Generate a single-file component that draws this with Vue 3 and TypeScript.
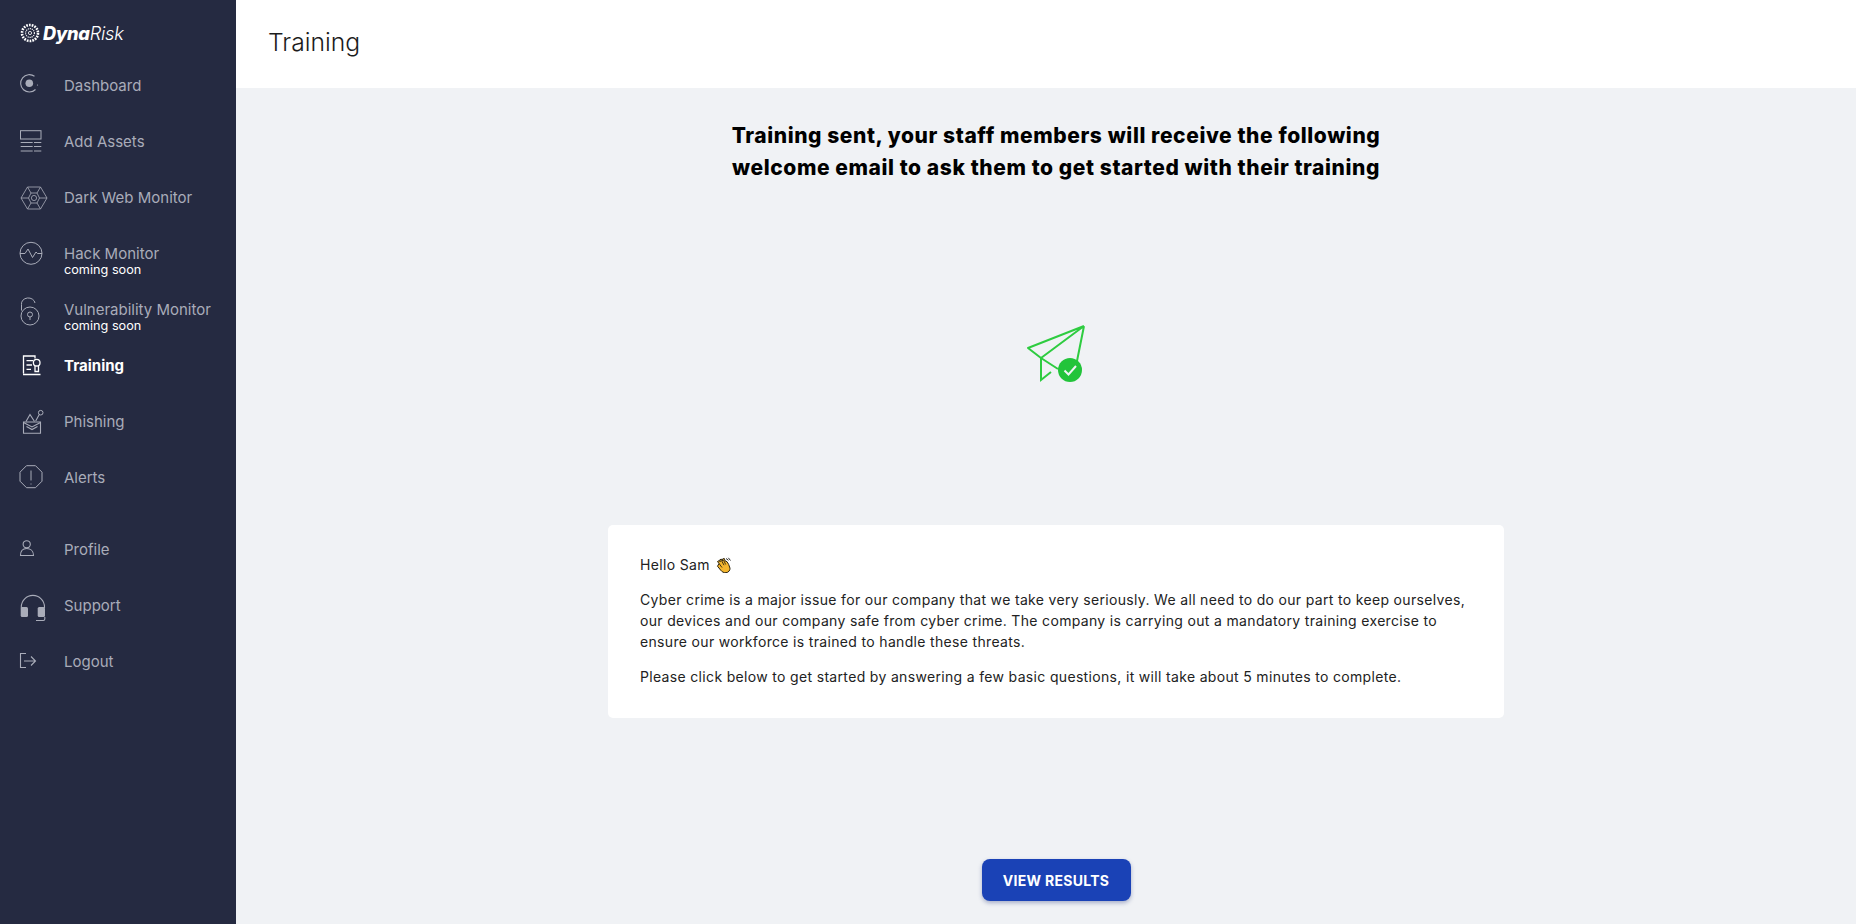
<script setup lang="ts">
interface NavItem { label: string; icon: string; soon?: boolean; active?: boolean }
const primary: NavItem[] = [
  { label: 'Dashboard', icon: 'dash' },
  { label: 'Add Assets', icon: 'assets' },
  { label: 'Dark Web Monitor', icon: 'web' },
  { label: 'Hack Monitor', icon: 'hack', soon: true },
  { label: 'Vulnerability Monitor', icon: 'lock', soon: true },
  { label: 'Training', icon: 'training', active: true },
  { label: 'Phishing', icon: 'phish' },
  { label: 'Alerts', icon: 'alert' },
]
const secondary: NavItem[] = [
  { label: 'Profile', icon: 'profile' },
  { label: 'Support', icon: 'support' },
  { label: 'Logout', icon: 'logout' },
]
</script>

<template>
  <div class="app">
    <aside class="sidebar">
      <div class="logo">
        <svg class="logo-mark" viewBox="0 0 20 20" width="20" height="20">
          <circle cx="10" cy="10" r="8" fill="none" stroke="#fff" stroke-width="2.6" stroke-dasharray="1.7 1.1" />
          <circle cx="10" cy="10" r="4.4" fill="none" stroke="#fff" stroke-width="1.1" stroke-dasharray="1.2 .8" />
          <circle cx="10" cy="10" r="1.6" fill="none" stroke="#fff" stroke-width=".8" />
        </svg>
        <span class="logo-text"><b>Dyna</b><i>Risk</i></span>
      </div>
      <nav class="nav">
        <div v-for="group in [primary, secondary]" :key="group[0].label" class="nav-group">
          <a v-for="item in group" :key="item.label" class="nav-item" :class="{ active: item.active }">
            <span class="icon">
              <svg class="glyph" viewBox="0 0 30 30" width="30" height="30" fill="none" stroke="currentColor" stroke-width="1">
                <template v-if="item.icon === 'dash'">
                  <path d="M17.500 6.300A8.700 8.700 0 1 0 18.500 19.500" stroke-width="1.100" />
                  <circle cx="12.300" cy="13.300" r="3.800" fill="currentColor" stroke="none" />
                  <circle cx="20.500" cy="15" r=".6" fill="currentColor" stroke="none" />
                </template>
                <template v-else-if="item.icon === 'assets'">
                  <rect x="3.500" y="4.700" width="20.500" height="8.300" />
                  <path d="M3.700 16.500h12M17 16.500h7.300M3.700 20.500h12M17 20.500h7.300M3.700 25h12M17 25h7.300" />
                </template>
                <template v-else-if="item.icon === 'web'">
                  <g stroke-width=".8">
                    <path d="M4 16 10.500 5h13L30 16l-6.500 11h-13z" />
                    <path d="M4 16h7.500M22.500 16H30M10.500 5l3.500 6M23.500 5 20 11M10.500 27l3.500-6M23.500 27 20 21" />
                    <path d="M11.500 16 14 11h6l2.500 5-2.500 5h-6z" />
                    <circle cx="17" cy="16" r="2.600" />
                  </g>
                </template>
                <template v-else-if="item.icon === 'hack'">
                  <circle cx="14" cy="15.300" r="11" />
                  <path d="M3 15.500h5l3-4.500 4.500 8.500 3.500-5.500 1.500 1.500H25" />
                </template>
                <template v-else-if="item.icon === 'lock'">
                  <circle cx="13" cy="22" r="9" />
                  <path d="M4.500 16.500V10.500a6.800 5.800 0 0 1 13.500-1.500" />
                  <circle cx="13" cy="20.500" r="2.500" />
                  <path d="M13 23v3" />
                </template>
                <template v-else-if="item.icon === 'training'">
                  <path d="M18 8.500V6H6.500v17.500M6 24.500h17.500" stroke-width="1.300" />
                  <path d="M9.500 10.700h6.500M9.500 15h5.500M9.500 19.300h4.500" stroke-width="1.300" />
                  <circle cx="19.700" cy="12.700" r="3.300" stroke-width="1.300" />
                  <path d="M18 16v5.500h3.500V16" stroke-width="1.300" />
                </template>
                <template v-else-if="item.icon === 'phish'">
                  <path d="M6.500 16v11.300h17V16z" stroke-width="1.100" />
                  <path d="M6.500 16.500l8.500 4.500 8.500-4.500M9.500 20.500l5.500 3 5.500-3" stroke-width="1.100" />
                  <path d="M9 15.500l4-7 4.500 7M18.700 15l3.600-6.500" stroke-width="1.100" />
                  <circle cx="23.700" cy="6.700" r="2.300" />
                </template>
                <template v-else-if="item.icon === 'alert'">
                  <path d="M9.500 3.700h9l6.500 6.500v9l-6.500 6.500h-9L3 19.200v-9z" />
                  <path d="M14 8.500v10M14 21.500v1" />
                </template>
                <template v-else-if="item.icon === 'profile'">
                  <circle cx="9.700" cy="10.300" r="3.600" stroke-width="1.100" />
                  <path d="M3.500 21.500c0-5 3-7 6.200-7s6.800 2 6.800 7z" stroke-width="1.100" />
                </template>
                <template v-else-if="item.icon === 'support'">
                  <path d="M4.300 18v-1a11.600 11.600 0 0 1 23.200 0v1" stroke-width="1.100" />
                  <rect x="3.700" y="17" width="7.300" height="10" rx="1.500" fill="currentColor" stroke="none" />
                  <rect x="20.700" y="17" width="7.300" height="10" rx="1.500" fill="currentColor" stroke="none" />
                  <path d="M27.800 27v2a1.500 1.500 0 0 1-1.500 1.500H19" stroke-width="1.100" />
                </template>
                <template v-else>
                  <path d="M9 7.500H3.500v14H9" stroke-width="1.100" />
                  <path d="M7 15h11.500M14 10.500l4.500 4.500-4.500 4.500" stroke-width="1.100" />
                </template>
              </svg>
            </span>
            <span class="labels" :class="{ 'with-note': item.soon }">
              <span class="label">{{ item.label }}</span>
              <span v-if="item.soon" class="soon">coming soon</span>
            </span>
          </a>
        </div>
      </nav>
    </aside>

    <main class="main">
      <header class="topbar"><h1>Training</h1></header>
      <section class="content">
        <h2>Training sent, your staff members will receive the following<br />welcome email to ask them to get started with their training</h2>
        <svg class="plane" viewBox="0 0 60 60" width="60" height="60" fill="none">
          <path d="M58 2 2 24l13 10M58 2 15 34M58 2l-7 35M15 34l17 11" stroke="#2ecc40" stroke-width="2" stroke-linejoin="round" />
          <path d="M15 34v22l10-8" stroke="#2ecc40" stroke-width="2" />
          <circle cx="44" cy="46" r="12" fill="#22c43a" />
          <path d="M38.500 46.500l4 4L50 42" stroke="#f0f2f5" stroke-width="2" />
        </svg>
        <article class="card">
          <p class="hello">Hello Sam
            <svg class="wave" viewBox="0 0 16 16" width="16" height="16">
              <path d="M3 6.500 1.500 4.500 3.300 3.600l.9 1.200-.4-2 1.500-.7 1.200 1.700.2-1.900L8.300 1.500l.8 2.300 2 1 1.600 2.700 1.300 3.700c.2 2-1.400 4.300-4 4.500-2.500.2-4-1-5.300-2.500L1.500 9.200z" fill="#f4b62e" stroke="#2b2412" stroke-width="1" />
              <path d="M3 6.500l3 4M5.400 3.400l2.600 4.800M7.500 3l2.200 4.500" stroke="#2b2412" stroke-width=".9" fill="none" />
              <path d="M10 1.500l2.500 1.800M12.300 .8l2.200 2.700" stroke="#333" stroke-width="1" fill="none" />
            </svg>
          </p>
          <p>Cyber crime is a major issue for our company that we take very seriously. We all need to do our part to keep ourselves, our devices and our company safe from cyber crime. The company is carrying out a mandatory training exercise to ensure our workforce is trained to handle these threats.</p>
          <p>Please click below to get started by answering a few basic questions, it will take about 5 minutes to complete.</p>
        </article>
        <button class="cta" type="button">VIEW RESULTS</button>
      </section>
    </main>
  </div>
</template>

<style>
html, body { margin: 0; height: 100%; overflow: hidden; }
</style>

<style scoped>
.app {
  display: flex;
  height: 924px;
  font-family: Inter, "Open Sans", "Liberation Sans", sans-serif;
  background: #f0f2f5;
  color: #111;
}
.sidebar {
  width: 236px;
  flex: none;
  background: #252a41;
  color: #a9acb9;
  display: flex;
  flex-direction: column;
}
.logo {
  display: flex;
  align-items: center;
  gap: 3px;
  height: 57px;
  padding: 8px 0 0 20px;
  box-sizing: border-box;
  color: #fff;
}
.logo-text { font-size: 18.200px; letter-spacing: -.2px; }
.logo-text b { font-weight: 800; font-style: italic; }
.logo-text i { font-weight: 300; }
.nav { display: flex; flex-direction: column; gap: 16px; }
.nav-group { display: flex; flex-direction: column; }
.nav-item {
  display: flex;
  align-items: center;
  height: 56px;
  box-sizing: border-box;
  padding-left: 17px;
}
.nav-item.active { color: #fff; font-weight: 700; }
.icon { width: 47px; flex: none; display: flex; }
.glyph { overflow: visible; }
.labels { display: flex; flex-direction: column; }
.labels.with-note { padding-top: 14px; }
.label { font-size: 15px; line-height: 19px; }
.soon { font-size: 12.700px; line-height: 14px; color: #fff; }
.main { flex: 1; min-width: 0; display: flex; flex-direction: column; }
.topbar {
  height: 88px;
  flex: none;
  box-sizing: border-box;
  background: #fff;
  display: flex;
  align-items: center;
  padding: 0 0 4px 32px;
}
h1 { margin: 0; font-size: 24.700px; font-weight: 300; color: #1c1c1c; }
.content {
  flex: 1;
  display: flex;
  flex-direction: column;
  align-items: center;
  padding: 32px 0 0 20px;
}
h2 {
  margin: 0;
  font-size: 21px;
  line-height: 32px;
  font-weight: 800;
  letter-spacing: .58px;
  text-align: center;
  color: #000;
}
.plane { margin-top: 140px; }
.card {
  width: 896px;
  height: 193px;
  margin-top: 141px;
  box-sizing: border-box;
  padding: 29px 32px;
  background: #fff;
  border-radius: 5px;
  font-size: 14px;
  line-height: 21px;
  letter-spacing: .33px;
  color: #222;
}
.card p { margin: 0 0 14px; }
.wave { vertical-align: -3px; margin-left: 2px; }
.cta {
  margin-top: 141px;
  width: 149px;
  height: 42px;
  border: 0;
  border-radius: 8px;
  background: #1a42b6;
  color: #fff;
  font: 700 14px Inter, sans-serif;
  letter-spacing: .3px;
  box-shadow: 0 2px 4px rgba(30, 50, 120, .35);
}
</style>
